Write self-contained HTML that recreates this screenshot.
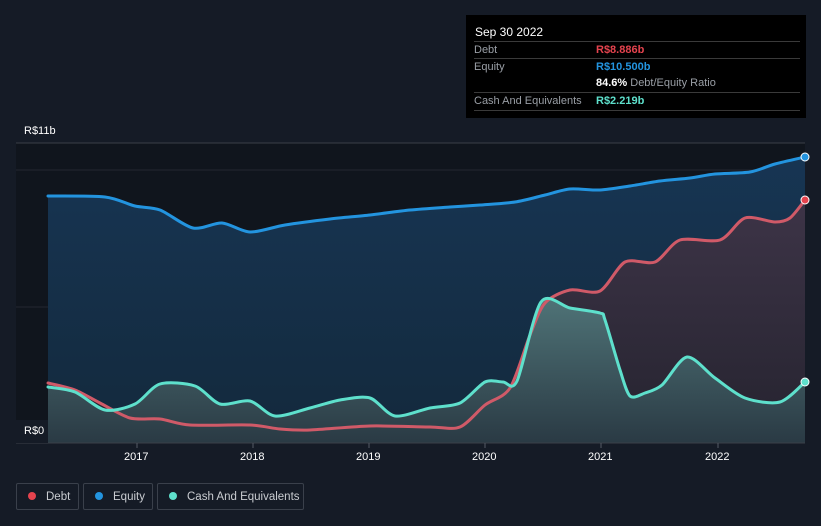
<!DOCTYPE html>
<html><head><style>
body{margin:0;width:821px;height:526px;background:#151b26;font-family:"Liberation Sans",sans-serif;overflow:hidden;position:relative}
.tt{position:absolute;left:466px;top:15px;width:340px;height:103px;background:#000;color:#fff;font-size:11px}
.row{position:absolute;left:8px;width:326px;border-top:1px solid #3a3a3a;height:17px;line-height:17px}
.lab{color:#9a9fa6}
.v{position:absolute;left:122px;font-weight:bold}
.leg{position:absolute;top:483px;height:27px;border:1px solid #3a404b;border-radius:2px;color:#c9ccd1;font-size:11.5px;line-height:26px;box-sizing:border-box;white-space:nowrap}
.dot{display:inline-block;width:8px;height:8px;border-radius:50%;margin:0 10px 0 11px;vertical-align:0}
.ax{position:absolute;color:#fff;font-size:11px}
</style></head><body>
<svg id="s" width="821" height="526" style="position:absolute;left:0;top:0">
<defs>
<linearGradient id="eq" x1="0" y1="0" x2="0" y2="1"><stop offset="0" stop-color="#173553"/><stop offset="1" stop-color="#13293c"/></linearGradient>
<linearGradient id="db" x1="0" y1="0" x2="0" y2="1"><stop offset="0" stop-color="#3d3447"/><stop offset="1" stop-color="#25232f"/></linearGradient>
<linearGradient id="cs" x1="0" y1="0" x2="0" y2="1"><stop offset="0" stop-color="#4f7377"/><stop offset="1" stop-color="#2a3a44"/></linearGradient>
</defs>
<rect x="16" y="143" width="789" height="300" fill="#10151d"/>
<line x1="16" y1="143" x2="805" y2="143" stroke="#3a3f48"/>
<line x1="16" y1="170" x2="805" y2="170" stroke="#232831"/>
<line x1="16" y1="307" x2="805" y2="307" stroke="#232831"/>
<g id="g"></g>
<circle cx="805" cy="157" r="4" fill="#2394df" stroke="#fff" stroke-width="1"/>
<circle cx="805" cy="200" r="4" fill="#e5434e" stroke="#fff" stroke-width="1"/>
<circle cx="805" cy="382" r="4" fill="#5ee0cc" stroke="#fff" stroke-width="1"/>
<line x1="16" y1="443" x2="805" y2="443" stroke="#3a3f48"/>
<g stroke="#555b66"><line x1="137" y1="443" x2="137" y2="448"/><line x1="253" y1="443" x2="253" y2="448"/><line x1="369" y1="443" x2="369" y2="448"/><line x1="485" y1="443" x2="485" y2="448"/><line x1="601" y1="443" x2="601" y2="448"/><line x1="718" y1="443" x2="718" y2="448"/></g>
<rect x="16" y="420" width="32" height="23" fill="#151b26"/>
</svg>
<script>
var E=[48,196,105,197,135,206,160,210,193,228,222,223,250,232,285,225,330,219,370,215,410,210,450,207,480,205,515,202,545,195,570,189,600,190,630,186,660,181,690,178,715,174,750,172,775,164,805,157];
var D=[48,383,75,390,100,403,130,418,160,419,190,425,250,425,280,429,310,430,370,426,430,427,460,427,485,405,510,388,530,335,545,303,570,290,600,291,625,262,655,262,680,240,720,240,745,218,775,222,790,218,805,200];
var C=[48,387,75,392,105,410,135,404,160,384,195,386,220,404,250,401,275,416,310,408,340,400,370,398,395,416,430,408,460,403,485,382,503,382,517,381,541,302,570,308,600,313,605,320,620,370,630,396,645,393,662,385,687,357,715,378,745,398,780,402,805,382];
function cr(a){var p=[];for(var i=0;i<a.length;i+=2)p.push([a[i],a[i+1]]);var d="M"+p[0];for(var i=0;i<p.length-1;i++){var p0=p[i-1]||p[i],p1=p[i],p2=p[i+1],p3=p[i+2]||p2;var t=0.14;d+="C"+(p1[0]+(p2[0]-p0[0])*t)+","+(p1[1]+(p2[1]-p0[1])*t)+" "+(p2[0]-(p3[0]-p1[0])*t)+","+(p2[1]-(p3[1]-p1[1])*t)+" "+p2[0]+","+p2[1];}return d;}
var g=document.getElementById("g"),h="";
[[E,"eq"],[D,"db"],[C,"cs"]].forEach(function(s){h+='<path d="'+cr(s[0])+'L805,443L48,443Z" fill="url(#'+s[1]+')"/>';});
[[E,"#2394df"],[D,"#d05a68"],[C,"#5ee0cc"]].forEach(function(s){h+='<path d="'+cr(s[0])+'" fill="none" stroke="'+s[1]+'" stroke-width="3" stroke-linecap="round" stroke-linejoin="round"/>';});
g.innerHTML=h;
</script>
<div class="ax" style="left:24px;top:125px">R$11b</div>
<div class="ax" style="left:24px;top:425px">R$0</div>
<div class="ax" style="left:124px;top:451px">2017</div>
<div class="ax" style="left:240px;top:451px">2018</div>
<div class="ax" style="left:356px;top:451px">2019</div>
<div class="ax" style="left:472px;top:451px">2020</div>
<div class="ax" style="left:588px;top:451px">2021</div>
<div class="ax" style="left:705px;top:451px">2022</div>
<div class="tt">
<div style="position:absolute;left:9px;top:10px;font-size:12px">Sep 30 2022</div>
<div class="row" style="top:26px"><span class="lab">Debt</span><span class="v" style="color:#e5434e">R$8.886b</span></div>
<div class="row" style="top:43px"><span class="lab">Equity</span><span class="v" style="color:#2394df">R$10.500b</span></div>
<div class="row" style="top:60px;border-top:none"><span class="v">84.6% <span style="color:#9a9fa6;font-weight:normal">Debt/Equity Ratio</span></span></div>
<div class="row" style="top:77px;border-bottom:1px solid #3a3a3a"><span class="lab">Cash And Equivalents</span><span class="v" style="color:#5ee0cc">R$2.219b</span></div>
</div>
<div class="leg" style="left:16px;width:63px"><span class="dot" style="background:#e5434e"></span>Debt</div>
<div class="leg" style="left:83px;width:70px"><span class="dot" style="background:#2394df"></span>Equity</div>
<div class="leg" style="left:157px;width:147px"><span class="dot" style="background:#5ee0cc"></span>Cash And Equivalents</div>
</body></html>
